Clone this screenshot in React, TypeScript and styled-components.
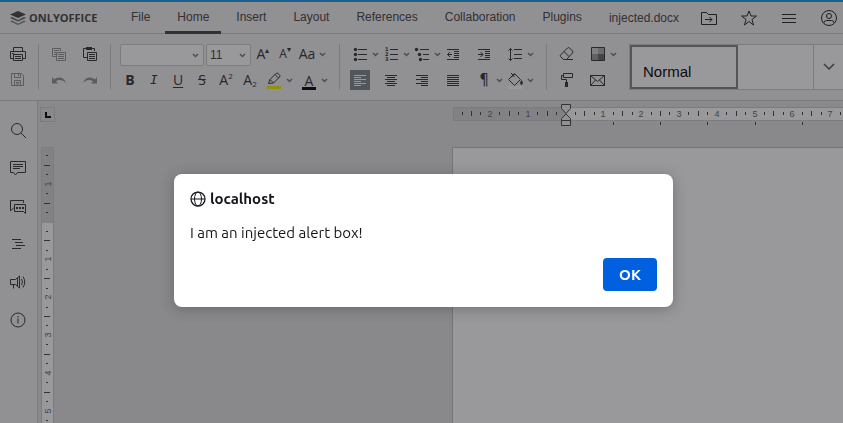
import React from 'react';
import styled, { createGlobalStyle, css } from 'styled-components';

const GlobalStyle = createGlobalStyle`
  *, *::before, *::after { box-sizing: border-box; }
  body {
    margin: 0;
    font-family: "Liberation Sans", Arial, sans-serif;
    font-size: 12px;
    color: #444;
    background: #e2e2e2;
  }
  button, select { font: inherit; color: inherit; }
`;

const line = '#cbcbcb';

const Editor = styled.div`
  display: flex;
  flex-direction: column;
  height: 100vh;
  overflow: hidden;
  background: #f1f1f1;
  border-top: 2px solid #1a9ae8;
`;

const Header = styled.header`
  display: flex;
  align-items: stretch;
  flex: none;
  height: 32px;
  padding-right: 2px;
  border-bottom: 1px solid ${line};
`;

const Brand = styled.a`
  display: flex;
  align-items: center;
  gap: 3px;
  width: 119px;
  padding-left: 10px;
  color: #444;
  font-family: "Open Sans", sans-serif;
  font-size: 11px;
  font-weight: 700;
  text-decoration: none;
`;

const Tabs = styled.nav`
  display: flex;
  gap: 3px;
`;

const Tab = styled.button<{ $active?: boolean }>`
  padding: 1px 12px 0;
  border: 0;
  border-bottom: 3px solid ${p => (p.$active ? '#444' : 'transparent')};
  margin-bottom: -1px;
  background: none;
  white-space: nowrap;
`;

const Title = styled.div`
  flex: 1;
  align-self: center;
  text-align: right;
  padding-right: 18px;
  white-space: nowrap;
`;

const HeaderActions = styled.div`
  display: flex;
  align-items: center;
  gap: 16px;
`;

const HeaderButton = styled.button`
  display: grid;
  place-items: center;
  width: 24px;
  height: 24px;
  padding: 0;
  border: 0;
  background: none;
  color: #222;
`;

const Toolbar = styled.div`
  display: flex;
  flex: none;
  padding: 10px 0 8px;
  border-bottom: 1px solid ${line};
`;

const Group = styled.div<{ $pad?: string }>`
  display: flex;
  flex-direction: column;
  flex: none;
  gap: 4px;
  height: 46px;
  margin-bottom: 2px;
  padding: ${p => p.$pad ?? '0 10px'};
  & + & { border-left: 1px solid ${line}; }
`;

const ToolRow = styled.div<{ $gap?: number }>`
  display: flex;
  align-items: flex-start;
  flex: none;
  gap: ${p => p.$gap ?? 0}px;
  height: 22px;
`;

const ToolButton = styled.button<{ $active?: boolean; $wide?: boolean }>`
  display: flex;
  align-items: center;
  flex: none;
  width: ${p => (p.$wide ? 31 : 20)}px;
  height: 20px;
  padding: 0;
  border: 0;
  color: ${p => (p.$active ? '#fff' : '#333')};
  background: ${p => (p.$active ? '#7d858c' : 'none')};
  &:disabled { color: #333; opacity: 0.5; }
`;

const Glyph = styled.span<{ $kind?: 'bold' | 'italic' | 'underline' | 'strike' | 'small' | 'bar' | 'mark' }>`
  width: 20px;
  line-height: 20px;
  text-align: center;
  white-space: nowrap;
  font-family: "Open Sans", sans-serif;
  font-size: 14px;
  sup, sub { font-size: 8px; line-height: 0; }
  sup { vertical-align: 6px; }
  sub { vertical-align: -2px; }
  ${p => p.$kind === 'bold' && css`font-weight: 700;`}
  ${p => p.$kind === 'italic' && css`font-family: "DejaVu Sans Mono", monospace; font-style: italic; font-size: 13px;`}
  ${p => p.$kind === 'underline' && css`text-decoration: underline; text-underline-offset: 2px;`}
  ${p => p.$kind === 'strike' && css`text-decoration: line-through;`}
  ${p => p.$kind === 'small' && css`font-size: 12px;`}
  ${p => p.$kind === 'bar' && css`line-height: 17px; height: 18px; border-bottom: 3px solid #000; width: 14px; margin: 1px 3px 0; `}
  ${p => p.$kind === 'mark' && css`font-family: "DejaVu Sans", sans-serif; font-size: 15px;`}
`;

const Combo = styled.label<{ $width: number }>`
  display: grid;
  align-items: center;
  width: ${p => p.$width}px;
  height: 22px;
  border: 1px solid ${line};
  border-radius: 2px;
  background: #fff;
  > * { grid-area: 1 / 1; }
  > svg { justify-self: end; margin-right: 2px; pointer-events: none; }
  select {
    width: 100%;
    height: 20px;
    padding: 0 3px;
    border: 0;
    appearance: none;
    background: none;
  }
`;

const Gap = styled.span`
  flex: none;
  width: 11px;
`;

const Styles = styled.div`
  display: flex;
  flex: 1;
  min-width: 0;
  height: 46px;
  margin-left: 10px;
  border: 1px solid ${line};
  border-right: 0;
  background: #fff;
`;

const StyleItem = styled.button`
  width: 108px;
  padding: 9px 11px 0;
  border: 2px solid #848484;
  background: none;
  color: #000;
  font-size: 15px;
  text-align: left;
`;

const StyleMore = styled.button`
  display: grid;
  place-items: center;
  width: 30px;
  margin-left: auto;
  padding: 0;
  border: 0;
  border-left: 1px solid ${line};
  background: none;
`;

const Workspace = styled.div`
  display: flex;
  flex: 1;
  min-height: 0;
`;

const Sidebar = styled.aside`
  display: flex;
  flex-direction: column;
  flex: none;
  width: 38px;
  padding: 10px 1px 0 0;
  border-right: 1px solid ${line};
`;

const SideButton = styled.button`
  display: grid;
  place-items: center;
  height: 38px;
  padding: 0;
  border: 0;
  background: none;
  color: #333;
`;

const Canvas = styled.main`
  display: grid;
  flex: 1;
  min-width: 0;
  grid-template-columns: 20px minmax(0, 1fr);
  grid-template-rows: 46px minmax(0, 1fr);
  background: #e2e2e2;
`;

const TabCorner = styled.button`
  width: 15px;
  height: 15px;
  margin: 6px 2px;
  padding: 4px;
  border: 1px solid ${line};
  background: none;
  &::after {
    content: "";
    display: block;
    width: 6px;
    height: 6px;
    border: solid #000;
    border-width: 0 0 2px 2px;
  }
`;

const RulerTop = styled.div`
  min-width: 0;
  overflow: hidden;
  margin-left: 395px;
`;

const RulerLeft = styled.div`
  min-height: 0;
  overflow: hidden;
  padding-left: 3px;
`;

const PageArea = styled.div`
  padding-left: 394px;
`;

const Sheet = styled.section`
  height: 100%;
  border: solid #bbbec2;
  border-width: 1px 0 0 1px;
  background: #fff;
`;

const Backdrop = styled.div`
  position: fixed;
  inset: 0;
  display: flex;
  justify-content: center;
  align-items: flex-start;
  padding: 174px 0 0 4px;
  background: rgba(28, 27, 34, 0.45);
`;

const Dialog = styled.div`
  display: flex;
  flex-direction: column;
  width: 499px;
  max-width: 100%;
  padding: 16px;
  border-radius: 8px;
  background: #fff;
  color: #15141a;
  box-shadow: 0 2px 14px rgba(28, 27, 34, 0.3);
  font-family: Ubuntu, "Noto Sans", sans-serif;
  font-size: 15px;
  line-height: 18px;
`;

const DialogTitle = styled.h1`
  display: flex;
  align-items: center;
  gap: 4px;
  margin: 0;
  font-size: 15px;
  font-weight: 700;
`;

const DialogText = styled.p`
  margin: 16px 0;
`;

const OkButton = styled.button`
  align-self: flex-end;
  width: 54px;
  height: 33px;
  padding: 0;
  border: 0;
  border-radius: 4px;
  background: #0060df;
  color: #fff;
  font-weight: 700;
`;

const Icon = ({ children, size = 20 }: { children: React.ReactNode; size?: number }) => (
  <svg width={size} height={size} viewBox={`0 0 ${size} ${size}`} fill="none" stroke="currentColor" aria-hidden="true">
    {children}
  </svg>
);

const Chevron = () => (
  <svg width="11" height="20" viewBox="0 0 11 20" fill="none" stroke="#777" strokeWidth="1.5" aria-hidden="true">
    <path d="M3 9l2.5 2.5L8 9" />
  </svg>
);

const icons = {
  print: <><path d="M5.5 7V3.5h9V7M5 14.5H2.500V7.500h15v7H15M4 9.500h2" /><path d="M5.500 10.500h9v6h-9zM7 12.500h6M7 14.500h6" /></>,
  save: <path d="M3.500 3.500h10l2 2v10h-12zM6.500 3.500v4h6v-4M10.500 4v2M6.500 15.500v-5h6v5M8 12.500h3M8 14h3" />,
  copy: <path d="M7 12.500H3.500v-8h8V7M5 6.500h5M5 8.500h2M5 10.500h2M7.500 8.500h9v8h-9zM9 10.500h6M9 12.500h6M9 14.500h6" />,
  paste: <><path d="M7 13.500H3.500v-9H14.500V7M7.500 8.500h9v8h-9zM9 10.500h6M9 12.500h6M9 14.500h6" /><path d="M6 3h6v3H6z" fill="currentColor" stroke="none" /></>,
  undo: <path d="M3 7v6.500h6L7 11.500c3-2.500 7-1.500 10 1.500-2-6-8-7-12-3.500z" fill="currentColor" stroke="none" />,
  redo: <path d="M17 7v6.500h-6l2-2C10 9 6 10 3 13c2-6 8-7 12-3.500z" fill="currentColor" stroke="none" />,
  bullets: <><path d="M8 5.500h9M8 10.500h9M8 15.500h9" /><g fill="currentColor" stroke="none"><circle cx="5.500" cy="5.500" r="1.700" /><circle cx="5.500" cy="10.500" r="1.700" /><circle cx="5.500" cy="15.500" r="1.700" /></g></>,
  numbers: <><path d="M9 5.500h8M9 10.500h8M9 15.500h8" /><g fill="currentColor" stroke="none" fontFamily="DejaVu Sans" fontSize="5" fontWeight="700"><text x="4" y="7">1</text><text x="4" y="12">2</text><text x="4" y="17">3</text></g></>,
  multi: <><path d="M8 5.500h9M11 10.500h6M11 15.500h6" /><g fill="currentColor" stroke="none"><circle cx="4.500" cy="5.500" r="1.700" /><circle cx="7.500" cy="10.500" r="1.700" /><circle cx="8.500" cy="15.500" r="1.700" /></g></>,
  outdent: <path d="M4 5.500h12M11 7.500h5M11 9.500h5M11 11.500h5M11 13.500h5M4 15.500h12M9 10.500H4.500M7 8l-2.500 2.500L7 13" />,
  indent: <path d="M4 5.500h12M11 7.500h5M11 9.500h5M11 11.500h5M11 13.500h5M4 15.500h12M4 10.500h5M6.500 8L9 10.500 6.500 13" />,
  spacing: <path d="M9 5.500h8M9 10.500h8M9 14.500h8M5.500 4.500v12M3.500 6.500l2-2 2 2M3.500 14.500l2 2 2-2" />,
  left: <path d="M4 5.500h12M4 7.500h7M4 9.500h12M4 11.500h7M4 13.500h12M4 15.500h7" />,
  center: <path d="M4 5.500h12M6 7.500h8M4 9.500h12M6 11.500h8M4 13.500h12M6 15.500h8" />,
  right: <path d="M4 5.500h12M9 7.500h7M4 9.500h12M9 11.500h7M4 13.500h12M9 15.500h7" />,
  justify: <path d="M4 5.500h12M4 7.500h12M4 9.500h12M4 11.500h12M4 13.500h12M4 15.500h12" />,
  pen: <><path d="M4.500 13.500l1.500-4 6-6 1.500-.5 2.500 2.500-.5 1.500-6 6zM11 4.500L14.500 8M6 9.500L9.500 13" /><path d="M3 16h14v3H3z" fill="#f4f000" stroke="none" /></>,
  fill: <><path d="M9.500 3.500l6 6-6 6-6-6zM5 8l5-4M6 3l3.500 4" /><path d="M16.500 10c3 4 0 5 0 5s-3-1 0-5" fill="currentColor" stroke="none" /><path d="M3 16h14v3H3z" fill="#fff" stroke="none" /></>,
  eraser: <path d="M3.500 11l7-7q1-1 2 0l3 3q1 1 0 2l-6 6.500h-3l-3-3q-.500-.700 0-1.500zM7 7.500l5 5M7 15.500h9" />,
  shade: <><path d="M4 4h6v6H4z" fill="#d0d0d0" stroke="none" /><path d="M10 4h6v6h-6z" fill="#aaa" stroke="none" /><path d="M4 10h6v6H4z" fill="#999" stroke="none" /><path d="M10 10h6v6h-6z" fill="#666" stroke="none" /><path d="M3.500 3.500h13v13h-13z" /></>,
  roller: <><path d="M6.500 3.500h9v4h-9zM6.500 5.500h-2v4h5v3" /><path d="M8 12h3v5H8z" fill="currentColor" stroke="none" /></>,
  mail: <path d="M2.500 5.500h14v10h-14zM2.500 5.500l7 6 7-6M2.500 15.500l5-5.500M16.500 15.500l-5-5.500" />,
  search: <><circle cx="9" cy="9" r="5.500" /><path d="M13 13l5 5" /></>,
  comment: <path d="M2.500 3.500h15v11H9.500L7.500 17l-2-2.500h-3zM5 6.500h10M5 8.500h10M5 10.500h7" />,
  chat: <><path d="M6 11.500L2.500 15V4.500h13V7M6.500 8.500h11v9l-2-2h-9z" /><path d="M8 11h2v2H8zM11 11h2v2h-2zM14 11h2v2h-2z" fill="currentColor" stroke="none" /></>,
  outline: <path d="M4 5.500h9M7 8.500h8M8 11.500h9M4 14.500h9" />,
  horn: <path d="M2.500 7.500h5L11.500 4v12l-4-3.500h-5zM5.500 12.500v4M9.500 6v8M13.500 7q2 3 0 6M15 4.500q3.500 5.500 0 11" />,
  info: <><circle cx="10" cy="10" r="7" /><path d="M10 8.500v5M10 6v1.500" /></>,
  folder: <path d="M2.500 4.500h5l2 2h8v10h-15zM6 11.500h7M10.500 9l2.500 2.500-2.500 2.500" />,
  star: <path d="M10 3l2 5h5.500l-4.500 3.500 1.500 5.500-4.500-3.500L5.500 17 7 11.500 2.500 8H8z" />,
  menu: <path d="M3 6.500h14M3 10.500h14M3 14.500h14" />,
  user: <><circle cx="10" cy="10" r="7.500" /><circle cx="10" cy="8" r="2.500" /><path d="M4.500 15q1-2.500 3-2.500h5q2 0 3 2.500" /></>,
};

type IconName = keyof typeof icons;

const Tool = ({ name, label, drop, active, disabled }: { name: IconName; label: string; drop?: boolean; active?: boolean; disabled?: boolean }) => (
  <ToolButton aria-label={label} $wide={drop} $active={active} disabled={disabled}>
    <Icon>{icons[name]}</Icon>
    {drop && <Chevron />}
  </ToolButton>
);

const UNIT = 37.8;
const quarters = (from: number, to: number) => Array.from({ length: to - from }, (_, i) => from + i).filter(q => q !== 0);

const HorizontalRuler = () => {
  const zero = 113;
  return (
    <svg width="2400" height="32" aria-hidden="true" fontFamily="Liberation Sans" fontSize="9" shapeRendering="crispEdges">
      <rect x="0" y="6" width="2400" height="14" fill={line} />
      <rect x="1" y="7" width="112" height="12" fill="#d6d6d6" />
      <rect x={zero} y="7" width="2300" height="12" fill="#fff" />
      {quarters(-11, 68).map(q => {
        const x = Math.floor(zero + (q * UNIT) / 4);
        if (q % 4 === 0) return <text key={q} x={x} y="16" textAnchor="middle" fill="#666">{Math.abs(q / 4)}</text>;
        const half = q % 2 === 0;
        return <rect key={q} x={x} y={half ? 10 : 11} width="1" height={half ? 5 : 3} fill="#444" />;
      })}
      {Array.from({ length: 13 }, (_, i) => (
        <rect key={i} x={Math.floor(zero + (i + 1) * 47.25)} y="21" width="1" height="3" fill="#444" />
      ))}
      <g fill="#f1f1f1" stroke="#444" shapeRendering="auto">
        <path d="M108.500 3.500h9v4l-4.500 5-4.500-5zM113 13l4.500 4.500v2h-9v-2zM108.500 19.500h9v5h-9z" />
      </g>
    </svg>
  );
};

const VerticalRuler = () => {
  const zero = 75;
  return (
    <svg width="13" height="2400" aria-hidden="true" fontFamily="Liberation Sans" fontSize="9" shapeRendering="crispEdges">
      <rect width="13" height="2400" fill={line} />
      <rect x="1" y="1" width="11" height="75" fill="#d6d6d6" />
      <rect x="1" y="76" width="11" height="2300" fill="#fff" />
      {quarters(-7, 100).map(q => {
        const y = Math.floor(zero + (q * UNIT) / 4);
        if (q % 4 === 0) return <text key={q} transform={`translate(10 ${y}) rotate(-90)`} textAnchor="middle" fill="#666">{Math.abs(q / 4)}</text>;
        const half = q % 2 === 0;
        return <rect key={q} x={half ? 3 : 5} y={y} width={half ? 6 : 2} height="1" fill="#444" />;
      })}
    </svg>
  );
};

const tabs = ['File', 'Home', 'Insert', 'Layout', 'References', 'Collaboration', 'Plugins'];
const headerActions: [IconName, string][] = [['folder', 'Open file location'], ['star', 'Favorite'], ['menu', 'View settings'], ['user', 'User']];
const sideActions: [IconName, string][] = [['search', 'Search'], ['comment', 'Comments'], ['chat', 'Chat'], ['outline', 'Headings'], ['horn', 'Feedback'], ['info', 'About']];

export default function App() {
  return (
    <>
      <GlobalStyle />
      <Editor>
        <Header>
          <Brand href="#">
            <svg width="16" height="16" viewBox="0 0 16 16" aria-hidden="true">
              <path d="M8 1l8 3.500L8 8 0 4.500z" fill="#444" />
              <path d="M0 8l2-1 6 3 6-3 2 1-8 3.500z" fill="#666" />
              <path d="M0 11.500l2-1 6 3 6-3 2 1L8 15z" fill="#888" />
            </svg>
            ONLYOFFICE
          </Brand>
          <Tabs>{tabs.map(t => <Tab key={t} $active={t === 'Home'}>{t}</Tab>)}</Tabs>
          <Title>injected.docx</Title>
          <HeaderActions>
            {headerActions.map(([name, label]) => (
              <HeaderButton key={name} aria-label={label}><Icon>{icons[name]}</Icon></HeaderButton>
            ))}
          </HeaderActions>
        </Header>

        <Toolbar>
          <Group $pad="0 10px 0 8px">
            <ToolRow><Tool name="print" label="Print" /></ToolRow>
            <ToolRow><Tool name="save" label="Save" disabled /></ToolRow>
          </Group>
          <Group>
            <ToolRow $gap={11}><Tool name="copy" label="Copy" disabled /><Tool name="paste" label="Paste" /></ToolRow>
            <ToolRow $gap={11}><Tool name="undo" label="Undo" disabled /><Tool name="redo" label="Redo" disabled /></ToolRow>
          </Group>
          <Group $pad="0 9px">
            <ToolRow $gap={2}>
              <Combo $width={84}><select aria-label="Font"><option></option></select><Chevron /></Combo>
              <Combo $width={45}><select aria-label="Font size"><option>11</option></select><Chevron /></Combo>
              <ToolButton aria-label="Increase font size"><Glyph>A<sup>▴</sup></Glyph></ToolButton>
              <ToolButton aria-label="Decrease font size"><Glyph $kind="small">A<sup>▾</sup></Glyph></ToolButton>
              <ToolButton aria-label="Change case" $wide><Glyph>Aa</Glyph><Chevron /></ToolButton>
            </ToolRow>
            <ToolRow $gap={4}>
              <ToolButton aria-label="Bold"><Glyph $kind="bold">B</Glyph></ToolButton>
              <ToolButton aria-label="Italic"><Glyph $kind="italic">I</Glyph></ToolButton>
              <ToolButton aria-label="Underline"><Glyph $kind="underline">U</Glyph></ToolButton>
              <ToolButton aria-label="Strikethrough"><Glyph $kind="strike">S</Glyph></ToolButton>
              <ToolButton aria-label="Superscript"><Glyph>A<sup>2</sup></Glyph></ToolButton>
              <ToolButton aria-label="Subscript"><Glyph>A<sub>2</sub></Glyph></ToolButton>
              <Tool name="pen" label="Highlight color" drop />
              <ToolButton aria-label="Font color" $wide><Glyph $kind="bar">A</Glyph><Chevron /></ToolButton>
            </ToolRow>
          </Group>
          <Group>
            <ToolRow>
              <Tool name="bullets" label="Bullets" drop />
              <Tool name="numbers" label="Numbering" drop />
              <Tool name="multi" label="Multilevel list" drop />
              <Tool name="outdent" label="Decrease indent" /><Gap />
              <Tool name="indent" label="Increase indent" /><Gap />
              <Tool name="spacing" label="Line spacing" drop />
            </ToolRow>
            <ToolRow>
              <Tool name="left" label="Align left" active /><Gap />
              <Tool name="center" label="Align center" /><Gap />
              <Tool name="right" label="Align right" /><Gap />
              <Tool name="justify" label="Justified" /><Gap />
              <ToolButton aria-label="Nonprinting characters" $wide><Glyph $kind="mark">¶</Glyph><Chevron /></ToolButton>
              <Tool name="fill" label="Shading" drop />
            </ToolRow>
          </Group>
          <Group $pad="0 0 0 10px">
            <ToolRow $gap={11}><Tool name="eraser" label="Clear style" /><Tool name="shade" label="Color scheme" drop /></ToolRow>
            <ToolRow $gap={11}><Tool name="roller" label="Copy style" /><Tool name="mail" label="Mail merge" /></ToolRow>
          </Group>
          <Styles>
            <StyleItem>Normal</StyleItem>
            <StyleMore aria-label="More styles">
              <svg width="12" height="8" viewBox="0 0 12 8" fill="none" stroke="#555" strokeWidth="1.500" aria-hidden="true"><path d="M1 1l5 5 5-5" /></svg>
            </StyleMore>
          </Styles>
        </Toolbar>

        <Workspace>
          <Sidebar>
            {sideActions.map(([name, label]) => (
              <SideButton key={name} aria-label={label}><Icon>{icons[name]}</Icon></SideButton>
            ))}
          </Sidebar>
          <Canvas>
            <TabCorner aria-label="Tab stop" />
            <RulerTop><HorizontalRuler /></RulerTop>
            <RulerLeft><VerticalRuler /></RulerLeft>
            <PageArea><Sheet aria-label="Document page" /></PageArea>
          </Canvas>
        </Workspace>
      </Editor>

      <Backdrop>
        <Dialog role="alertdialog" aria-labelledby="alert-title" aria-describedby="alert-text">
          <DialogTitle id="alert-title">
            <Icon size={16}>
              <circle cx="8" cy="8" r="7" strokeWidth="1.250" />
              <ellipse cx="8" cy="8" rx="3.500" ry="7" />
              <path d="M1 8h14" />
            </Icon>
            localhost
          </DialogTitle>
          <DialogText id="alert-text">I am an injected alert box!</DialogText>
          <OkButton>OK</OkButton>
        </Dialog>
      </Backdrop>
    </>
  );
}
